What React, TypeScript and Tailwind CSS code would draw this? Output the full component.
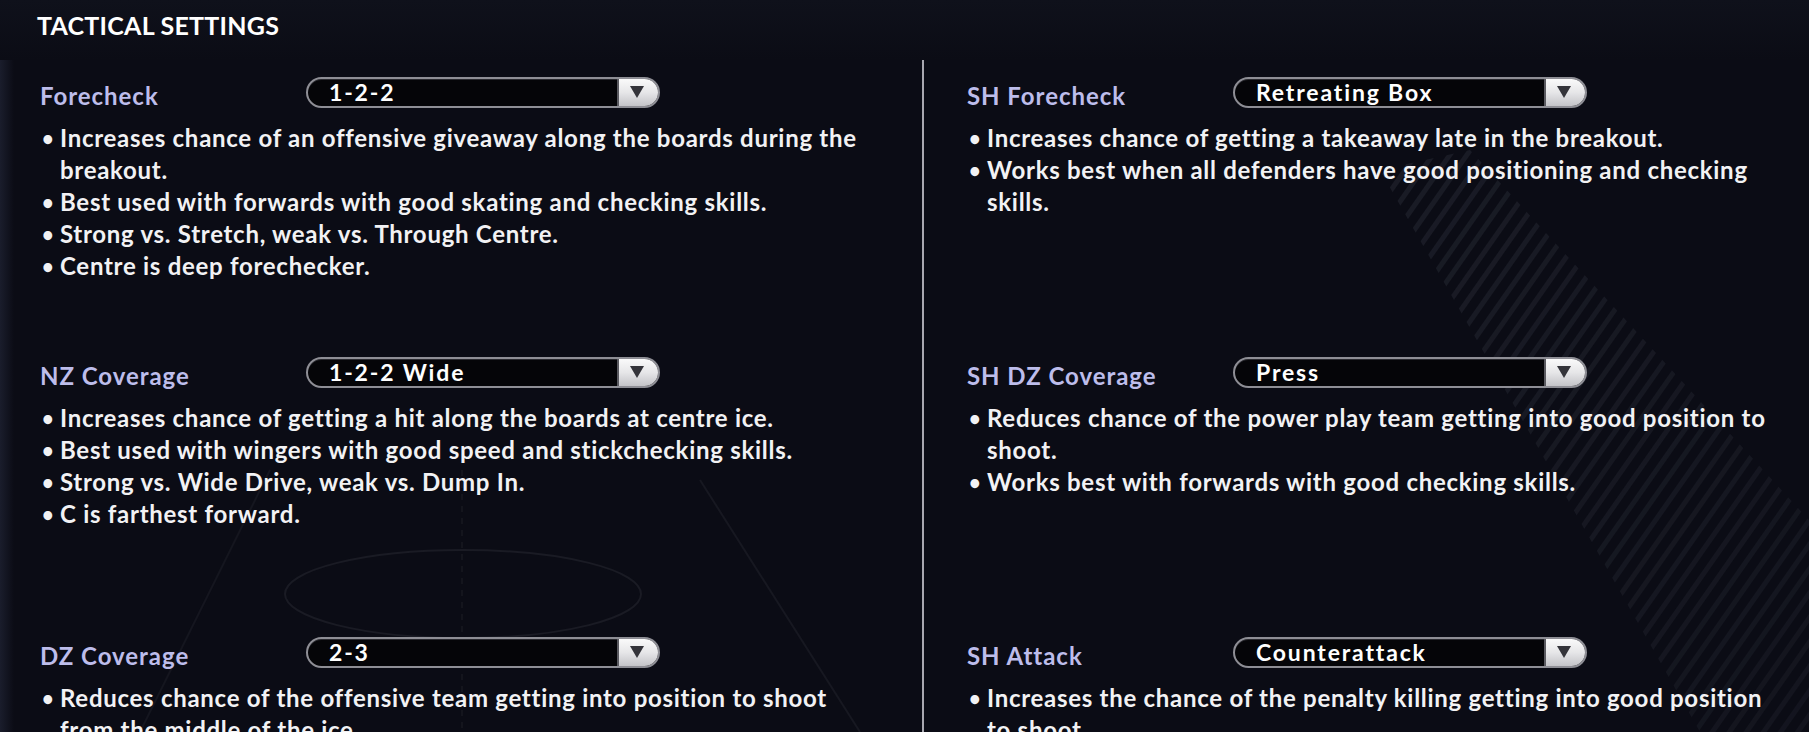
import React from 'react';

interface Setting {
  label: string;
  value: string;
  notes: string[];
}

const left: Setting[] = [
  {
    label: 'Forecheck',
    value: '1-2-2',
    notes: [
      'Increases chance of an offensive giveaway along the boards during the breakout.',
      'Best used with forwards with good skating and checking skills.',
      'Strong vs. Stretch, weak vs. Through Centre.',
      'Centre is deep forechecker.',
    ],
  },
  {
    label: 'NZ Coverage',
    value: '1-2-2 Wide',
    notes: [
      'Increases chance of getting a hit along the boards at centre ice.',
      'Best used with wingers with good speed and stickchecking skills.',
      'Strong vs. Wide Drive, weak vs. Dump In.',
      'C is farthest forward.',
    ],
  },
  {
    label: 'DZ Coverage',
    value: '2-3',
    notes: [
      'Reduces chance of the offensive team getting into position to shoot from the middle of the ice.',
      'Works best with defenders with good checking skills.',
    ],
  },
];

const right: Setting[] = [
  {
    label: 'SH Forecheck',
    value: 'Retreating Box',
    notes: [
      'Increases chance of getting a takeaway late in the breakout.',
      'Works best when all defenders have good positioning and checking skills.',
    ],
  },
  {
    label: 'SH DZ Coverage',
    value: 'Press',
    notes: [
      'Reduces chance of the power play team getting into good position to shoot.',
      'Works best with forwards with good checking skills.',
    ],
  },
  {
    label: 'SH Attack',
    value: 'Counterattack',
    notes: [
      'Increases the chance of the penalty killing getting into good position to shoot.',
      'Works best with forwards with good speed.',
    ],
  },
];

function Dropdown({ value }: { value: string }) {
  return (
    <div className="flex h-[31px] w-[354px] items-stretch overflow-hidden rounded-full border-2 border-[#8e8e95] bg-[#050508] shadow-[inset_0_1px_0_#2a2a30]">
      <span className="flex flex-1 items-center pl-[21px] text-[23px] leading-none tracking-[0.08em] text-white">{value}</span>
      <span className="flex w-[41px] items-center justify-center border-l-2 border-[#5a5a60] bg-gradient-to-b from-[#fafafa] via-[#e6e6e8] to-[#c4c4c8] pr-[4px]">
        <svg width="16" height="14" viewBox="0 0 16 14">
          <polygon points="1,1 15,1 8,13" fill="#34343a" />
        </svg>
      </span>
    </div>
  );
}

function Section({ s }: { s: Setting }) {
  return (
    <div className="h-[280px]">
      <div className="flex h-[36px] items-center">
        <div className="w-[266px] pt-[8px] text-[24px] tracking-[0.04em] text-[#bdbdeb]">{s.label}</div>
        <Dropdown value={s.value} />
      </div>
      <ul className="mt-[12px]">
        {s.notes.map((n) => (
          <li key={n} className="flex text-[24px] leading-[32px] tracking-[0.03em] text-[#f2f2f4]">
            <span className="w-[20px] shrink-0 pl-[2px] text-[20px]">•</span>
            <span>{n}</span>
          </li>
        ))}
      </ul>
    </div>
  );
}

export default function App() {
  return (
    <div
      className="relative h-[732px] w-[1809px] overflow-hidden bg-[#0b0c15] font-bold text-white"
      style={{ fontFamily: 'Lato, "Open Sans", sans-serif' }}
    >
      {/* background decoration */}
      <div className="pointer-events-none absolute inset-y-0 left-0 w-[14px] bg-gradient-to-r from-[#1a1d2c] to-transparent" />
      <div className="pointer-events-none absolute inset-x-0 top-0 h-[60px] bg-gradient-to-b from-[#0f111b] to-[#0b0c15]" />
      <svg className="pointer-events-none absolute inset-0" width="1809" height="732">
        <defs>
          <pattern id="stripes" width="14" height="14" patternUnits="userSpaceOnUse" patternTransform="rotate(35)">
            <rect width="5" height="14" fill="#1c1e28" />
          </pattern>
          <linearGradient id="fade" x1="0" y1="0" x2="1" y2="1">
            <stop offset="0" stopColor="#fff" stopOpacity="0.9" />
            <stop offset="1" stopColor="#fff" stopOpacity="0.5" />
          </linearGradient>
          <mask id="m">
            <polygon points="1380,170 1470,150 1809,520 1809,732 1700,732" fill="url(#fade)" />
          </mask>
        </defs>
        <rect width="1809" height="732" fill="url(#stripes)" mask="url(#m)" />
        <ellipse cx="463" cy="594" rx="178" ry="44" fill="none" stroke="#1a1b24" strokeWidth="2" />
        <line x1="462" y1="470" x2="462" y2="732" stroke="#14151d" strokeWidth="2" strokeDasharray="6 6" />
        <line x1="700" y1="480" x2="860" y2="732" stroke="#171821" strokeWidth="2" />
        <line x1="270" y1="470" x2="140" y2="732" stroke="#15161f" strokeWidth="2" />
      </svg>

      <div className="relative flex h-[60px] items-start pl-[37px] pt-[10px] text-[25px] leading-[30px] tracking-[0.01em]">
        TACTICAL SETTINGS
      </div>

      <div className="relative flex">
        <div className="w-[884px] pl-[40px] pt-[14px]">
          {left.map((s) => (
            <Section key={s.label} s={s} />
          ))}
        </div>
        <div className="ml-[38px] h-[672px] w-[2px] bg-[#a8a8b0]" />
        <div className="ml-[43px] w-[810px] pt-[14px]">
          {right.map((s) => (
            <Section key={s.label} s={s} />
          ))}
        </div>
      </div>
    </div>
  );
}
